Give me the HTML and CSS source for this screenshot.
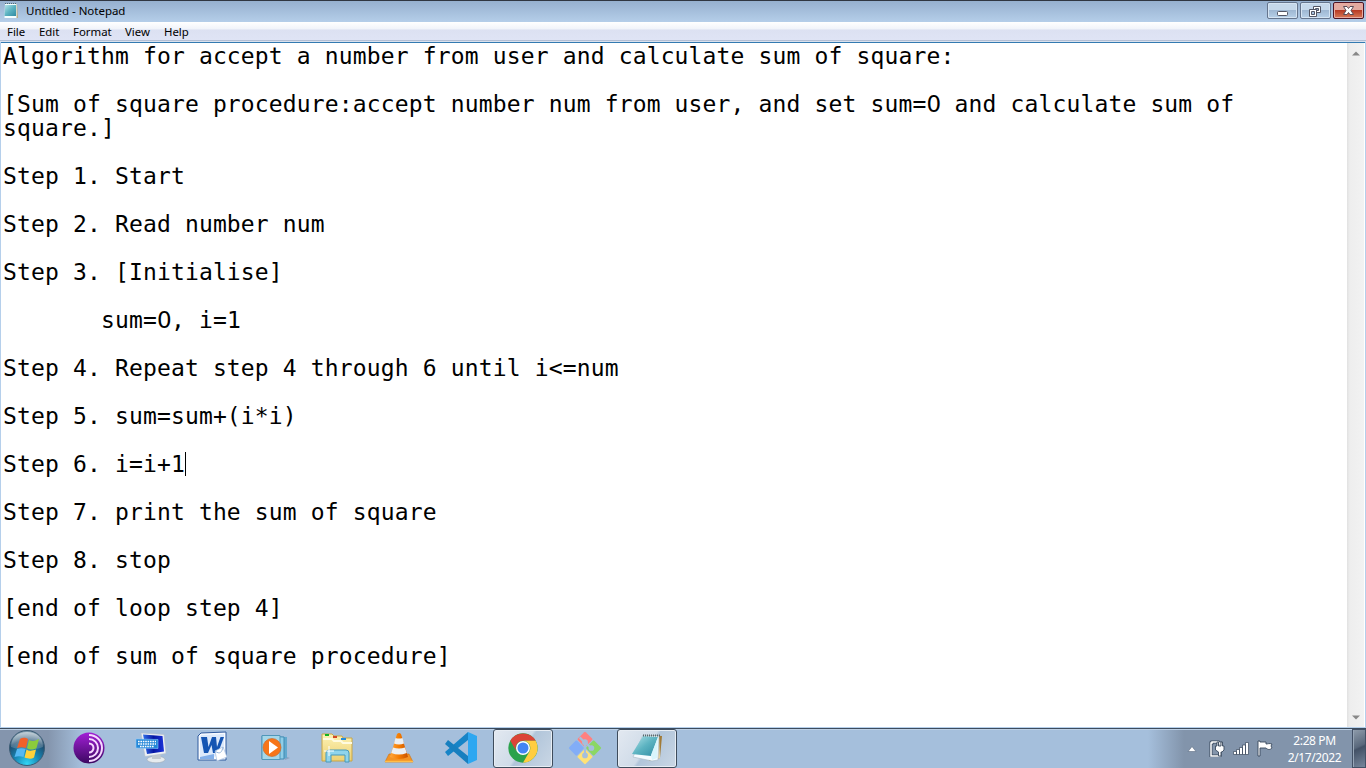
FILE: index.html
```html
<!DOCTYPE html>
<html lang="en">
<head>
<meta charset="utf-8">
<title>Untitled - Notepad</title>
<link rel="stylesheet" href="styles.css">
</head>
<body>
<svg class="defs" width="0" height="0">
<defs>
<linearGradient id="page" x1="0" y1="0" x2="1" y2="1"><stop offset="0" stop-color="#b5e5ea"/><stop offset=".5" stop-color="#5cb3c1"/><stop offset="1" stop-color="#2f8ca3"/></linearGradient>
<radialGradient id="orb" cx=".5" cy=".95" r=".9"><stop offset="0" stop-color="#31d6f5"/><stop offset=".4" stop-color="#1787b5"/><stop offset=".75" stop-color="#1d4d70"/><stop offset="1" stop-color="#7895a8"/></radialGradient>
<linearGradient id="gloss" x1="0" y1="0" x2="0" y2="1"><stop offset="0" stop-color="#fff" stop-opacity=".55"/><stop offset="1" stop-color="#fff" stop-opacity=".12"/></linearGradient>
<linearGradient id="tor" x1="0" y1="0" x2="0" y2="1"><stop offset="0" stop-color="#a21fd6"/><stop offset="1" stop-color="#3c0861"/></linearGradient>
<linearGradient id="screen" x1="0" y1="0" x2="1" y2="0"><stop offset="0" stop-color="#2f6ee8"/><stop offset=".5" stop-color="#0717a3"/><stop offset="1" stop-color="#1b34d9"/></linearGradient>
<linearGradient id="cone" x1="0" y1="0" x2="1" y2="0"><stop offset="0" stop-color="#ffa63b"/><stop offset=".5" stop-color="#f57c00"/><stop offset="1" stop-color="#c95200"/></linearGradient>
<linearGradient id="folder" x1="0" y1="0" x2="0" y2="1"><stop offset="0" stop-color="#fdf3b5"/><stop offset="1" stop-color="#ecd073"/></linearGradient>
</defs>
</svg>
<main class="window">
<header class="titlebar">
<svg class="app-icon" width="16" height="17" viewBox="0 0 16 17"><path d="M3 2h11l1 14H4z" fill="#b9aa83"/><path d="M2 2h11.500v14H1.500z" fill="#f5ffff"/><path d="M2 3h11v11L1.500 14z" fill="url(#page)"/><path d="M2 1.500h12" stroke="#536b70" stroke-dasharray="1 1"/></svg>
<h1 class="title">Untitled - Notepad</h1>
<div class="controls">
<span class="control"><svg width="29" height="15" viewBox="0 0 29 15"><rect x="9.500" y="8.500" width="10" height="4" rx="1" fill="#fff" stroke="#535665"/></svg></span>
<span class="control"><svg width="29" height="15" viewBox="0 0 29 15"><path d="M12.500 3.500h7v6h-7z" fill="#fff" stroke="#535665"/><path d="M14.500 5.500h3v2h-3z" fill="#8ba5c3" stroke="#535665"/><path d="M8.500 6.500h7v7h-7z" fill="#fff" stroke="#535665"/><path d="M10.500 8.500h3v3h-3z" fill="#a9c3df" stroke="#535665"/></svg></span>
<span class="control close"><svg width="29" height="15" viewBox="0 0 29 15"><path d="M9.500 3.500h3.500l1.500 2 1.500-2h3.500l-2.500 4 2.500 4H16l-1.500-2-1.500 2H9.500l2.500-4z" fill="#fff" stroke="#594a55"/></svg></span>
</div>
</header>
<nav class="menubar"><span class="menu file">File</span><span class="menu edit">Edit</span><span class="menu format">Format</span><span class="menu view">View</span><span class="menu">Help</span></nav>
<section class="editor">
<div class="text">Algorithm for accept a number from user and calculate sum of square:

[Sum of square procedure:accept number num from user, and set sum=<span class="zero">0</span> and calculate sum of
square.]

Step 1. Start

Step 2. Read number num

Step 3. [Initialise]

       sum=<span class="zero">0</span>, i=1

Step 4. Repeat step 4 through 6 until i&lt;=num

Step 5. sum=sum+(i*i)

Step 6. i=i+1<span class="caret"></span>

Step 7. print the sum of square

Step 8. stop

[end of loop step 4]

[end of sum of square procedure]</div>
<div class="scrollbar">
<svg width="8" height="5" viewBox="0 0 8 5"><path d="M0 4.500 4 .5l4 4z" fill="#888"/></svg>
<svg width="8" height="5" viewBox="0 0 8 5"><path d="M0 .5h8l-4 4z" fill="#888"/></svg>
</div>
</section>
</main>
<footer class="taskbar">
<div class="start"><svg width="38" height="38" viewBox="0 0 38 38"><circle cx="19" cy="19" r="17.500" fill="url(#orb)" stroke="#3b5b74"/><path d="M3 18C3 8 10 3 19 3s16 5 16 15c-9 4-22 4-32 0z" fill="url(#gloss)"/><path d="M12 10c3-2 6-1 8 0l-2 9c-3-1-6-1-9 0z" fill="#f0602a"/><path d="M21 11c3 2 6 1 10-1l-2.500 9c-3 2-7 2-9.500 0z" fill="#8bcb3c"/><path d="M9 20c3-1 6-1 8.500 0l-2 8c-3-1-6-1-9 0z" fill="#54b8f3"/><path d="M18.500 20.500c3 2 6 1 9.500 0l-2 8c-3 2-6 1-9.500 0z" fill="#ffd13b"/></svg></div>
<div class="tasks">
<div class="task"><svg width="32" height="32" viewBox="0 0 32 32"><circle cx="16" cy="16" r="15.500" fill="url(#tor)"/><g fill="none" stroke="#f5d9ff" stroke-width="2"><path d="M16 11.500a4.500 4.500 0 0 1 0 9M16 7a9 9 0 0 1 0 18M16 3a13 13 0 0 1 0 26"/></g></svg></div>
<div class="task"><svg width="32" height="32" viewBox="0 0 32 32"><ellipse cx="21" cy="27.500" rx="9" ry="3.300" fill="#e6ebee" stroke="#a5adb5" stroke-width=".6"/><path d="m17 20 8-1 1 8h-9z" fill="#c2c9cf"/><path d="m6 1 23 1.500 2 19-21 3z" fill="#edf1f5" stroke="#b4bec8" stroke-width=".6"/><path d="m8 2.500 19.500 1.500 1.500 15.500-17 2.500z" fill="url(#screen)"/><path d="m1 7 22 .5v9L1 16z" fill="#2487d7" stroke="#8acafb" stroke-width=".6"/><path d="M3 9.500h18M3 12h18M5 14.500h14" stroke="#fff" stroke-width="1.300" stroke-dasharray="1.600 .8"/></svg></div>
<div class="task word"><svg width="32" height="32" viewBox="0 0 32 32"><path d="m5 2 25-1v28H2V5z" fill="#f8fbff" stroke="#2f5a9e"/><path d="m5 4 23-1v21L4 28V6z" fill="#dce9fb"/><path d="m4 26 14-3v5H4z" fill="#82afe9"/><path d="M5 6h6l1.500 10L16 6h4l1 10 3.500-10H28l-6 16h-5l-1.500-8L12 22H8z" fill="#1555b3"/><path d="m19 20 8-4 4 10-10 4z" fill="#fff" stroke="#a9c2df" stroke-width=".7"/><path d="M19 20c5 4 7 1 8-4" fill="none" stroke="#94b4da"/></svg></div>
<div class="task"><svg width="32" height="32" viewBox="0 0 32 32"><path d="m23 23 8 3-5 2z" fill="#718eac" opacity=".5"/><path d="m3 4 25 1v21l-24 2z" fill="#61a9ce"/><path d="m3 4 22 1v22H3z" fill="#8fcee8" stroke="#408bb3"/><path d="M3 3.500h18v24H3z" fill="#a5d7e9" stroke="#5097ba"/><circle cx="13" cy="15.500" r="9" fill="#f77518" stroke="#c96b2e" stroke-width=".7"/><path d="m10 9 9 6.500-9 6.500z" fill="#fff"/></svg></div>
<div class="task"><svg width="34" height="32" viewBox="0 0 34 32"><path d="M2 5V2h10l2 2h8l1 2h9v23H2z" fill="url(#folder)" stroke="#c8a646"/><path d="M5 3h4" stroke="#14b321" stroke-width="2"/><path d="M13 5h4" stroke="#d44825" stroke-width="2"/><path d="M21 7h5" stroke="#228bdc" stroke-width="2"/><path d="M3 7h9l2 2h7l2 2h9" fill="none" stroke="#fffbe0" stroke-width="2"/><path d="M6 30V21q0-3 3-3h17q3 0 3 3v9h-4v-7H11v7z" fill="#8fd4ec" stroke="#4799bb"/><path d="M9 14v10M4 19h10" stroke="#fff" stroke-width="1"/></svg></div>
<div class="task"><svg width="32" height="32" viewBox="0 0 32 32"><path d="M6 22h20l4 8H2z" fill="#f49323" stroke="#ca7016" stroke-width=".6"/><path d="M14 2q2-2 4 0l7 23q-9 4-18 0z" fill="url(#cone)"/><path d="m12.500 6-1.500 5.500q5 2 10 0L19.500 6q-3.500 1-7 0zM10 15.500 8.300 21q7.700 3 15.400 0L22 15.500q-6 2-12 0z" fill="#eceff2"/><path d="M2 29.500h28" stroke="#ffbe4a" stroke-width="1.500"/></svg></div>
<div class="task"><svg width="34" height="34" viewBox="0 0 34 34"><path d="M24 1 1 21l3 4 20-16z" fill="#1684c7"/><path d="m1 13 3-4 20 16v8z" fill="#177fbf"/><path d="m24 1 9 4v24l-9 4z" fill="#2da7f1"/></svg></div>
<div class="task active"><svg width="32" height="32" viewBox="0 0 48 48"><circle cx="24" cy="24" r="22" fill="#2ba24c"/><path d="M5 13a22 22 0 0 1 38 0H24a11 11 0 0 0-9.500 16.500z" fill="#db4437"/><path d="M43 13A22 22 0 0 1 24 46l9.500-16.500A11 11 0 0 0 24 13z" fill="#ffcd40"/><circle cx="24" cy="24" r="10.500" fill="#fff"/><circle cx="24" cy="24" r="8.300" fill="#4285f4"/></svg></div>
<div class="task"><svg width="34" height="34" viewBox="0 0 32 32"><g transform="rotate(45 16 16)"><rect x="5" y="5" width="10.500" height="10.500" rx="1" fill="#ff8080"/><rect x="16.500" y="5" width="10.500" height="10.500" rx="1" fill="#8bd764"/><rect x="5" y="16.500" width="10.500" height="10.500" rx="1" fill="#82adf7"/><rect x="16.500" y="16.500" width="10.500" height="10.500" rx="1" fill="#ffe276"/></g><path d="m11 6 5 5v12m0-12 6 5" fill="none" stroke="#a5bfdc" stroke-width="2"/><g fill="#a5bfdc"><circle cx="16" cy="10.500" r="2.700"/><circle cx="22" cy="16" r="2.700"/><circle cx="16" cy="23" r="2.700"/></g></svg></div>
<div class="task active"><svg width="34" height="34" viewBox="0 0 34 34"><path d="m14 4 18 1-2 22-11 3z" fill="#a17b38"/><path d="m29 5 1 22-9 3z" fill="#e8d6a9"/><path d="m13 4 16 1-1 24-6 1L3 26z" fill="#f5fbff" stroke="#a5b7c3" stroke-width=".6"/><path d="m13 5 15 1-7 19-19-2z" fill="url(#page)"/><path d="m28 6-7 18 1 5 5-2z" fill="#d9f5fc"/><path d="M13 4.500h17" stroke="#59696f" stroke-width="2" stroke-dasharray="1 1"/></svg></div>
</div>
<div class="tray">
<svg width="10" height="6" viewBox="0 0 10 6"><path d="M1 5.500 5 .5l4 5z" fill="#fff" stroke="#5c6c83" stroke-width=".6"/></svg>
<svg class="power" width="16" height="17" viewBox="0 0 16 17"><path d="M3 2h6v1h2v13H2V3h1z" fill="#8495ab" stroke="#39485c" stroke-width="3"/><path d="M3 2h6v1h2v13H2V3h1z" fill="none" stroke="#fff" stroke-width="1.500"/><path d="M8 2h1.500v4H12V2h1.500v4H15v4l-2 2h-1v4H9.500v-4l-3-2V6H8z" fill="#fff" stroke="#39485c" stroke-width=".9"/></svg>
<svg class="signal" width="17" height="15" viewBox="0 0 17 15"><g fill="#fff" stroke="#39485c" stroke-width=".7"><path d="M.5 10.500h3v3h-3zM3.500 8.500h3v5h-3zM6.500 6.500h3v7h-3zM9.500 4h3v9.500h-3zM12.500 1.500h3v12h-3z"/></g></svg>
<svg class="flag" width="17" height="17" viewBox="0 0 17 17"><path d="M1 1h2v1h6v2c2 0 3-1 6 0l-1 2 1 2c-2 2-4 2-6 0H3v8H1z" fill="#fff" stroke="#39485c" stroke-width=".9"/></svg>
<time class="clock"><span class="time">2:28 PM</span><span class="date">2/17/2022</span></time>
<div class="show-desktop"></div>
</div>
</footer>
</body>
</html>
```

FILE: styles.css
```css
* { box-sizing: border-box; }
body { margin: 0; width: 1366px; height: 768px; display: flex; flex-direction: column; overflow: hidden; font-family: "Noto Sans", sans-serif; color: #000; }
svg { display: block; flex-shrink: 0; }
.defs { position: absolute; }
.window { height: 728px; display: flex; flex-direction: column; background: #b5cfeb; }
.titlebar { height: 22px; display: flex; align-items: center; border-top: 1px solid #303641; padding: 0 0 2px 3px; background: linear-gradient(#96b0cf, #b5cee9); }
.app-icon { margin-right: 7px; }
.title { margin: 0; font-size: 11.500px; font-weight: 400; line-height: 19px; letter-spacing: -.03px; }
.controls { margin-left: auto; display: flex; gap: 2px; align-self: flex-start; padding: 1px 2px 0 0; }
.control { width: 31px; height: 17px; border: 1px solid #65758d; border-radius: 2px; background: linear-gradient(#c5d8eb 45%, #9fb8d3 50%, #b7d0e8); box-shadow: inset 0 0 0 1px #d5e4f3; }
.close { border-color: #4d1525; background: linear-gradient(#e3aaa0 45%, #b83b25 50%, #d77a58); box-shadow: inset 0 0 0 1px #e8aaa0; }
.menubar { height: 20px; display: flex; align-items: center; padding: 0 7px; font-size: 11.400px; line-height: 18px; background: linear-gradient(#fff 0, #f1f4fa 34%, #dce1f2 40%, #dfe4f5 90%, #aebbd2 92%, #eef3fa 100%); }
.menu { white-space: nowrap; }
.file { width: 32px; }
.edit { width: 34px; }
.format { width: 52px; }
.view { width: 39px; }
.editor { height: 685px; margin: 0 1px; border-top: 1px solid #337ab1; background: #fff; display: flex; justify-content: space-between; }
.text { padding: 1px 0 0 2px; white-space: pre; font-family: "DejaVu Sans Mono", monospace; font-size: 23px; line-height: 24px; letter-spacing: .145px; }
.zero { font-family: "DejaVu Sans", sans-serif; letter-spacing: -.63px; line-height: 0; }
.caret { display: inline-block; width: 1px; height: 24px; margin-right: -1px; background: #000; vertical-align: top; }
.scrollbar { width: 17px; margin-right: 1px; padding: 8px 0 7px 5px; background: linear-gradient(90deg, #e1e1e1, #eee 3px, #f2f2f2); display: flex; flex-direction: column; justify-content: space-between; }
.taskbar { height: 40px; display: flex; border-top: 1px solid #3c4c5e; box-shadow: inset 0 1px #bdd0e5; background: linear-gradient(90deg, #8495ad 0, #8495ad 48px, #a5bfdc 82px, #a5bfdc 1148px, #8294ab 1184px); }
.start { width: 58px; padding: 0 0 0 8px; }
.tasks { display: flex; gap: 2px; padding-left: 1px; }
.task { width: 60px; height: 39px; padding-bottom: 2px; display: flex; align-items: center; justify-content: center; }
.word { padding: 0 3px 4px 0; }
.active { border: 1px solid #3e4c5c; border-radius: 3px; box-shadow: inset 0 0 0 1px #e7edf4; background: linear-gradient(125deg, #e3e9f1, #cfdbe8 48%, #b1c5da 52%, #cad7e5); }
.tray { margin-left: auto; display: flex; align-items: center; }
.power { margin-left: 12px; }
.signal { margin-left: 8px; }
.flag { margin-left: 7px; }
.clock { width: 75px; display: flex; flex-direction: column; align-items: center; margin-left: 3px; color: #fff; font-size: 12px; line-height: 17px; letter-spacing: -.4px; }
.show-desktop { width: 14px; height: 39px; border: 1px solid #435166; background: linear-gradient(155deg, #8e9baa, #59687c 45%, #435166 50%, #76869b); box-shadow: inset 1px 0 #97a6b7; }
```
